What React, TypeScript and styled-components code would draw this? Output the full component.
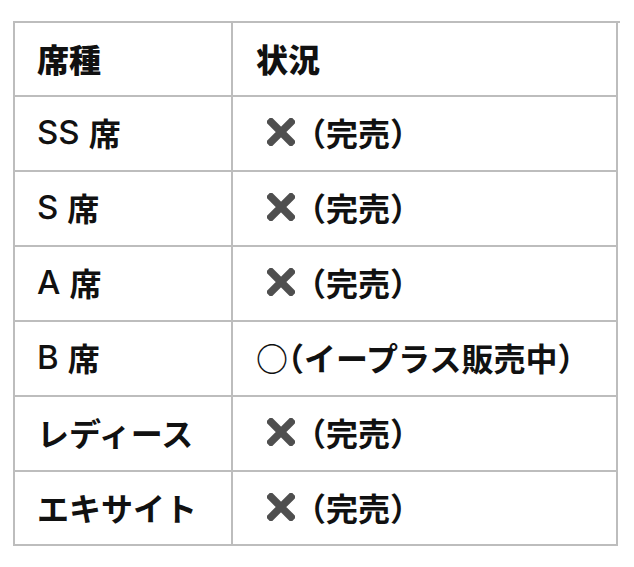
import React from 'react'
import styled, { createGlobalStyle } from 'styled-components'

const GlobalStyle = createGlobalStyle`
  html, body {
    margin: 0;
    padding: 0;
    background: #ffffff;
  }
  body {
    font-family: "Noto Sans CJK JP", "Noto Sans", sans-serif;
    color: #111111;
  }
`

const Table = styled.div`
  display: grid;
  grid-template-columns: 218px 385px;
  grid-template-rows: 74px repeat(5, 75px) 74px;
  width: 605px;
  margin: 21px 0 0 13px;
  border-top: 2px solid #bdbdbd;
  border-left: 2px solid #bdbdbd;
`

const Cell = styled.div<{ $head?: boolean }>`
  display: flex;
  align-items: center;
  padding: 0 0 3px 22px;
  border-right: 2px solid #bdbdbd;
  border-bottom: 2px solid #bdbdbd;
  font-size: 32px;
  line-height: 1;
  font-weight: ${({ $head }) => ($head ? 900 : 700)};
  white-space: nowrap;
`

const StatusCell = styled(Cell)`
  padding-left: 23px;
`

const Latin = styled.span`
  font-family: Inter, "Liberation Sans", sans-serif;
  font-weight: 500;
  font-size: 33px;
  margin-right: 9px;
`

const Paren = styled.span`
  font-feature-settings: "halt";
`

const CrossIcon = styled.svg`
  width: 28px;
  height: 28px;
  margin: 0 15px 0 11px;
  flex: none;
`

function Cross() {
  return (
    <CrossIcon viewBox="0 0 28 28" aria-label="✖">
      <path d="M4 4 L24 24 M24 4 L4 24" stroke="#4f4f4f" strokeWidth="7.5" strokeLinecap="square" />
    </CrossIcon>
  )
}

type Row = { code?: string; name: string; open: boolean }

const rows: Row[] = [
  { code: 'SS', name: '席', open: false },
  { code: 'S', name: '席', open: false },
  { code: 'A', name: '席', open: false },
  { code: 'B', name: '席', open: true },
  { name: 'レディース', open: false },
  { name: 'エキサイト', open: false },
]

export default function App() {
  return (
    <>
      <GlobalStyle />
      <Table>
        <Cell $head>席種</Cell>
        <StatusCell $head>状況</StatusCell>
        {rows.map((r) => (
          <React.Fragment key={(r.code ?? '') + r.name}>
            <Cell>
              {r.code && <Latin>{r.code}</Latin>}
              {r.name}
            </Cell>
            <StatusCell>
              {r.open ? '○' : <Cross />}
              <Paren>（</Paren>
              {r.open ? 'イープラス販売中' : '完売'}
              <Paren>）</Paren>
            </StatusCell>
          </React.Fragment>
        ))}
      </Table>
    </>
  )
}
